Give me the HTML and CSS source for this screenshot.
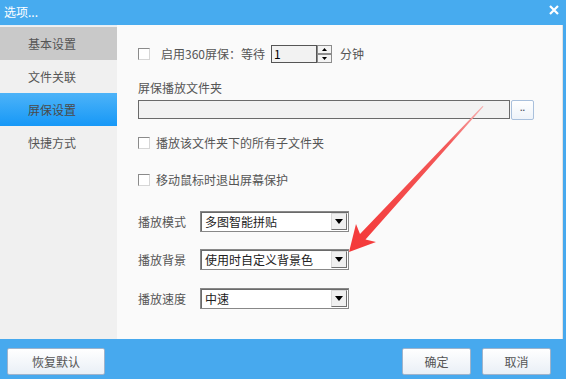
FILE: index.html
```html
<!DOCTYPE html>
<html lang="zh">
<head>
<meta charset="utf-8">
<link rel="stylesheet" href="styles.css">
</head>
<body>
<div class="window">
  <div class="titlebar">
    <span class="title">选项...</span>
    <svg class="close" width="10" height="10" viewBox="0 0 10 10"><path d="M1 1L9 9M9 1L1 9" stroke="#fff" stroke-width="2.2" fill="none"/></svg>
  </div>
  <div class="main">
    <div class="sidebar">
      <div class="nav-item nav-hover">基本设置</div>
      <div class="nav-item">文件关联</div>
      <div class="nav-item nav-active">屏保设置</div>
      <div class="nav-item">快捷方式</div>
    </div>
    <div class="content">
      <div class="row row-enable">
        <span class="checkbox"></span>
        <span class="label enable-text">启用360屏保：等待</span>
        <span class="spin">
          <span class="spin-input">1</span>
          <span class="spin-btns">
            <span class="spin-btn"><svg width="5" height="3" viewBox="0 0 5 3"><path d="M0 3L2.5 0L5 3Z" fill="#000"/></svg></span>
            <span class="spin-btn"><svg width="5" height="3" viewBox="0 0 5 3"><path d="M0 0L2.5 3L5 0Z" fill="#000"/></svg></span>
          </span>
        </span>
        <span class="label unit">分钟</span>
      </div>
      <div class="row row-folder-label"><span class="label">屏保播放文件夹</span></div>
      <div class="row row-folder">
        <span class="folder-input"></span>
        <span class="browse-btn">..</span>
      </div>
      <div class="row row-check2">
        <span class="checkbox"></span>
        <span class="label check-text">播放该文件夹下的所有子文件夹</span>
      </div>
      <div class="row row-check3">
        <span class="checkbox"></span>
        <span class="label check-text">移动鼠标时退出屏幕保护</span>
      </div>
      <div class="row row-sel1">
        <span class="label sel-label">播放模式</span>
        <span class="select"><span class="select-text">多图智能拼贴</span><span class="select-btn"><svg width="8" height="5" viewBox="0 0 8 5"><path d="M0 0H8L4 5Z" fill="#000"/></svg></span></span>
      </div>
      <div class="row row-sel2">
        <span class="label sel-label">播放背景</span>
        <span class="select"><span class="select-text">使用时自定义背景色</span><span class="select-btn"><svg width="8" height="5" viewBox="0 0 8 5"><path d="M0 0H8L4 5Z" fill="#000"/></svg></span></span>
      </div>
      <div class="row row-sel3">
        <span class="label sel-label">播放速度</span>
        <span class="select"><span class="select-text">中速</span><span class="select-btn"><svg width="8" height="5" viewBox="0 0 8 5"><path d="M0 0H8L4 5Z" fill="#000"/></svg></span></span>
      </div>
      <svg class="arrow" width="566" height="379" viewBox="0 0 566 379">
        <defs>
          <linearGradient id="ag" x1="483" y1="107" x2="349" y2="251" gradientUnits="userSpaceOnUse">
            <stop offset="0" stop-color="#f7b0b0"/>
            <stop offset="0.25" stop-color="#f35a5a"/>
            <stop offset="1" stop-color="#f43838"/>
          </linearGradient>
        </defs>
        <path d="M483.5 106.5 L365.5 239.5 L376 242 L349 252 L356 224 L360 234 L482.5 106 Z" fill="url(#ag)"/>
      </svg>
    </div>
  </div>
  <div class="footer">
    <span class="btn btn-reset">恢复默认</span>
    <span class="spacer"></span>
    <span class="btn btn-ok">确定</span>
    <span class="btn btn-cancel">取消</span>
  </div>
</div>
</body>
</html>
```
FILE: styles.css
```css
* { box-sizing: border-box; }
html, body { margin: 0; padding: 0; }
body {
  width: 566px;
  height: 379px;
  overflow: hidden;
  font-family: "Noto Sans CJK SC", "Microsoft YaHei", sans-serif;
  font-size: 12px;
  color: #555;
  background: #47a9ee;
}
.window {
  width: 566px;
  height: 379px;
  display: flex;
  flex-direction: column;
}
.titlebar {
  height: 25px;
  background: #47abef;
  display: flex;
  align-items: center;
  padding-left: 4px;
  padding-right: 7px;
  color: #fff;
  line-height: 16px;
}
.title { flex: 1; padding-bottom: 1px; }
.close { display: block; margin-top: -5px; }
.main {
  height: 314px;
  display: flex;
  border-right: 3px solid #47a9ee;
}
.sidebar {
  width: 117px;
  background: #f0f0f0;
  padding-top: 1px;
  border-top: 1px solid #e6eef5;
}
.nav-item {
  height: 33px;
  line-height: 33px;
  padding-left: 28px;
  color: #555;
}
.nav-hover { background: #c9c9c9; }
.nav-active { background: linear-gradient(#4db3f8, #1698f7); color: #4a4a4a; }
.content {
  flex: 1;
  position: relative;
  background: #fafafa;
  padding-left: 21px;
  border-right: 1px solid #e2e2e2;
}
.row { display: flex; align-items: center; }
.label { line-height: 16px; white-space: nowrap; }
.checkbox {
  width: 12px;
  height: 12px;
  background: #fff;
  border: 1px solid #8a8a8a;
  border-right-color: #d6d6d6;
  border-bottom-color: #d6d6d6;
  flex: none;
}
.row-enable { margin-top: 20px; height: 18px; }
.enable-text { margin-left: 11px; }
.spin { display: flex; margin-left: 6px; height: 18px; }
.spin-input {
  width: 46px;
  height: 18px;
  background: #f2f2f2;
  border: 1px solid #555;
  color: #000;
  line-height: 16px;
  padding-left: 2px;
}
.spin-btns { display: flex; flex-direction: column; width: 15px; }
.spin-btn {
  height: 9px;
  background: #f4f4f4;
  border: 1px solid #8c8c8c;
  display: flex;
  align-items: center;
  justify-content: center;
}
.spin-btn svg { display: block; }
.unit { margin-left: 8px; }
.row-folder-label { margin-top: 17px; height: 16px; }
.row-folder { margin-top: 4px; height: 19px; }
.folder-input {
  width: 372px;
  height: 19px;
  background: #f2f2f2;
  border: 1px solid #6a6a6a;
}
.browse-btn {
  width: 23px;
  height: 20px;
  margin-left: 1px;
  border: 1px solid #a9c0dc;
  border-radius: 2px;
  background: linear-gradient(#ffffff, #eef3f9);
  color: #556;
  font-size: 9px;
  line-height: 14px;
  text-align: center;
  font-family: "Liberation Sans", sans-serif;
  font-weight: bold;
}
.row-check2 { margin-top: 16px; height: 16px; }
.row-check3 { margin-top: 21px; height: 16px; }
.check-text { margin-left: 6px; }
.sel-label { width: 62px; }
.row-sel1 { margin-top: 23px; height: 21px; }
.row-sel2 { margin-top: 17px; height: 21px; }
.row-sel3 { margin-top: 18px; height: 21px; }
.select {
  width: 149px;
  height: 21px;
  background: #fff;
  border: 1px solid #888;
  box-shadow: inset 1px 1px 0 #6a6a6a;
  display: flex;
  align-items: center;
  padding: 1px 1px 1px 4px;
}
.select-text { flex: 1; color: #222; line-height: 16px; }
.select-btn {
  width: 16px;
  height: 17px;
  background: #f0f0f0;
  border: 1px solid #d8d8d8;
  border-right-color: #707070;
  border-bottom-color: #707070;
  display: flex;
  align-items: center;
  justify-content: center;
}
.select-btn svg { display: block; }
.arrow {
  position: absolute;
  left: -117px;
  top: -25px;
  pointer-events: none;
}
.footer {
  height: 40px;
  background: #47a9ee;
  display: flex;
  align-items: flex-start;
  padding: 9px 15px 0 7px;
}
.spacer { flex: 1; }
.btn {
  height: 27px;
  background: linear-gradient(#ffffff, #e9eff6);
  border: 1px solid #9fb3cb;
  border-radius: 2px;
  text-align: center;
  line-height: 25px;
  color: #555;
}
.btn-reset { width: 98px; }
.btn-ok { width: 69px; }
.btn-cancel { width: 69px; margin-left: 11px; }
```
